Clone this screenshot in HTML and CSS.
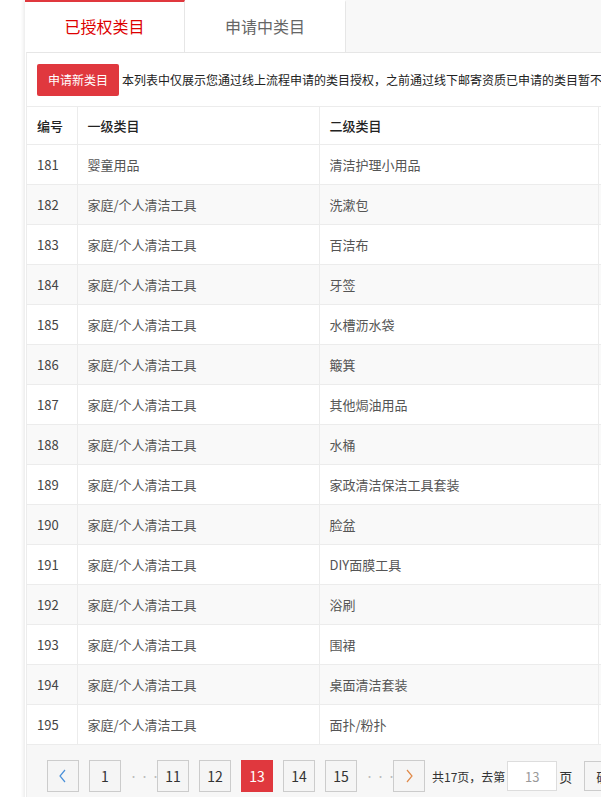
FILE: index.html
```html
<!DOCTYPE html>
<html lang="zh">
<head>
<meta charset="utf-8">
<title>已授权类目</title>
<link rel="stylesheet" href="styles.css">
</head>
<body>
<div class="page">
  <div class="main">
    <div class="tabs">
      <div class="tab active">已授权类目</div>
      <div class="tab">申请中类目</div>
      <div class="tab-fill"></div>
    </div>
    <div class="panel">
      <div class="toolbar">
        <button class="btn-new">申请新类目</button>
        <span class="notice">本列表中仅展示您通过线上流程申请的类目授权，之前通过线下邮寄资质已申请的类目暂不在此展示</span>
      </div>
      <table class="grid">
        <colgroup>
          <col class="c1"><col class="c2"><col class="c3"><col class="c4">
        </colgroup>
        <thead>
          <tr><th>编号</th><th>一级类目</th><th>二级类目</th><th></th></tr>
        </thead>
        <tbody>
          <tr><td>181</td><td>婴童用品</td><td>清洁护理小用品</td><td></td></tr>
          <tr><td>182</td><td>家庭/个人清洁工具</td><td>洗漱包</td><td></td></tr>
          <tr><td>183</td><td>家庭/个人清洁工具</td><td>百洁布</td><td></td></tr>
          <tr><td>184</td><td>家庭/个人清洁工具</td><td>牙签</td><td></td></tr>
          <tr><td>185</td><td>家庭/个人清洁工具</td><td>水槽沥水袋</td><td></td></tr>
          <tr><td>186</td><td>家庭/个人清洁工具</td><td>簸箕</td><td></td></tr>
          <tr><td>187</td><td>家庭/个人清洁工具</td><td>其他焗油用品</td><td></td></tr>
          <tr><td>188</td><td>家庭/个人清洁工具</td><td>水桶</td><td></td></tr>
          <tr><td>189</td><td>家庭/个人清洁工具</td><td>家政清洁保洁工具套装</td><td></td></tr>
          <tr><td>190</td><td>家庭/个人清洁工具</td><td>脸盆</td><td></td></tr>
          <tr><td>191</td><td>家庭/个人清洁工具</td><td>DIY面膜工具</td><td></td></tr>
          <tr><td>192</td><td>家庭/个人清洁工具</td><td>浴刷</td><td></td></tr>
          <tr><td>193</td><td>家庭/个人清洁工具</td><td>围裙</td><td></td></tr>
          <tr><td>194</td><td>家庭/个人清洁工具</td><td>桌面清洁套装</td><td></td></tr>
          <tr><td>195</td><td>家庭/个人清洁工具</td><td>面扑/粉扑</td><td></td></tr>
        </tbody>
      </table>
      <div class="pager">
        <a class="pg arrow"><svg width="10" height="14" viewBox="0 0 10 14"><path d="M7 1 L2 7 L7 13" fill="none" stroke="#4a90d9" stroke-width="1.2"/></svg></a>
        <a class="pg">1</a>
        <span class="dots">···</span>
        <a class="pg">11</a>
        <a class="pg">12</a>
        <a class="pg cur">13</a>
        <a class="pg">14</a>
        <a class="pg">15</a>
        <span class="dots">···</span>
        <a class="pg arrow"><svg width="10" height="14" viewBox="0 0 10 14"><path d="M3 1 L8 7 L3 13" fill="none" stroke="#e08a4a" stroke-width="1.2"/></svg></a>
        <span class="total">共17页，去第</span>
        <input class="goto" value="13">
        <span class="unit">页</span>
        <button class="ok">确定</button>
      </div>
    </div>
  </div>
</div>
</body>
</html>
```
FILE: styles.css
```css
html, body {
  margin: 0;
  padding: 0;
  overflow: hidden;
  background: #fff;
  font-family: "Noto Sans CJK SC", "Microsoft YaHei", sans-serif;
  color: #333;
}
.page {
  width: 601px;
  height: 797px;
  padding-left: 25px;
  box-sizing: border-box;
  overflow: hidden;
}
.main {
  width: 760px;
  box-shadow: -2px 0 3px rgba(0, 0, 0, 0.07);
  background: #fff;
  min-height: 797px;
}
.tabs {
  display: flex;
  height: 52px;
  background: #f8f8f8;
}
.tab {
  width: 160px;
  box-sizing: border-box;
  background: #fff;
  display: flex;
  align-items: center;
  justify-content: center;
  font-size: 16px;
  color: #666;
  border-right: 1px solid #e6e6e6;
  border-top: 2px solid transparent;
  padding-bottom: 2px;
}
.tab.active {
  color: #d00;
  border-top-color: #e0383e;
}
.tab + .tab {
  width: 161px;
}
.tab-fill {
  flex: 1;
}
.panel {
  margin-left: 1px;
  border-top: 1px solid #e6e6e6;
  border-left: 1px solid #ececec;
  background: #fff;
}
.toolbar {
  display: flex;
  align-items: center;
  height: 53px;
  padding-left: 10px;
  box-sizing: border-box;
  white-space: nowrap;
}
.btn-new {
  height: 32px;
  width: 82px;
  padding: 0;
  border: none;
  border-radius: 2px;
  background: #e0383e;
  color: #fff;
  font-family: inherit;
  font-size: 12px;
  margin-right: 3px;
}
.notice {
  font-size: 12px;
  color: #222;
}
.grid {
  border-collapse: collapse;
  table-layout: fixed;
  width: 720px;
  font-size: 13px;
}
.c1 { width: 50px; }
.c2 { width: 242px; }
.c3 { width: 279px; }
.c4 { width: 149px; }
.grid th, .grid td {
  text-align: left;
  padding: 0 0 0 10px;
  border: 1px solid #ececec;
  border-left: none;
  white-space: nowrap;
  overflow: hidden;
}
.grid th {
  height: 37px;
  font-weight: 500;
  color: #222;
}
.grid td {
  height: 39px;
  color: #555;
}
.grid td:first-child {
  color: #444;
}
.grid tbody tr:nth-child(even) td {
  background: #f9f9f9;
}
.pager {
  display: flex;
  align-items: center;
  height: 62px;
  background: #f7f7f7;
  padding-left: 20px;
  padding-bottom: 4px;
  white-space: nowrap;
  font-size: 13px;
}
.pg {
  width: 32px;
  height: 32px;
  box-sizing: border-box;
  border: 1px solid #ccc;
  background: #f5f5f5;
  display: flex;
  align-items: center;
  justify-content: center;
  font-size: 14px;
  color: #333;
  margin-right: 10px;
}
.pg.cur {
  background: #e0383e;
  border-color: #e0383e;
  color: #fff;
}
.dots {
  width: 20px;
  margin: 0 8px 0 -2px;
  color: #bbb;
  font-size: 9px;
  letter-spacing: 2px;
  text-align: center;
}
.total {
  margin-left: -3px;
  font-size: 12px;
  color: #333;
}
.goto {
  width: 50px;
  height: 30px;
  box-sizing: border-box;
  border: 1px solid #ddd;
  background: #fff;
  text-align: center;
  font-family: inherit;
  font-size: 13px;
  color: #999;
  margin: 0 2px 0 2px;
  padding: 0;
}
.unit {
  font-size: 13px;
  color: #333;
  margin-right: 12px;
}
.ok {
  height: 30px;
  width: 50px;
  border: 1px solid #ccc;
  background: #f5f5f5;
  font-family: inherit;
  font-size: 13px;
  color: #333;
  padding: 0;
}
```
